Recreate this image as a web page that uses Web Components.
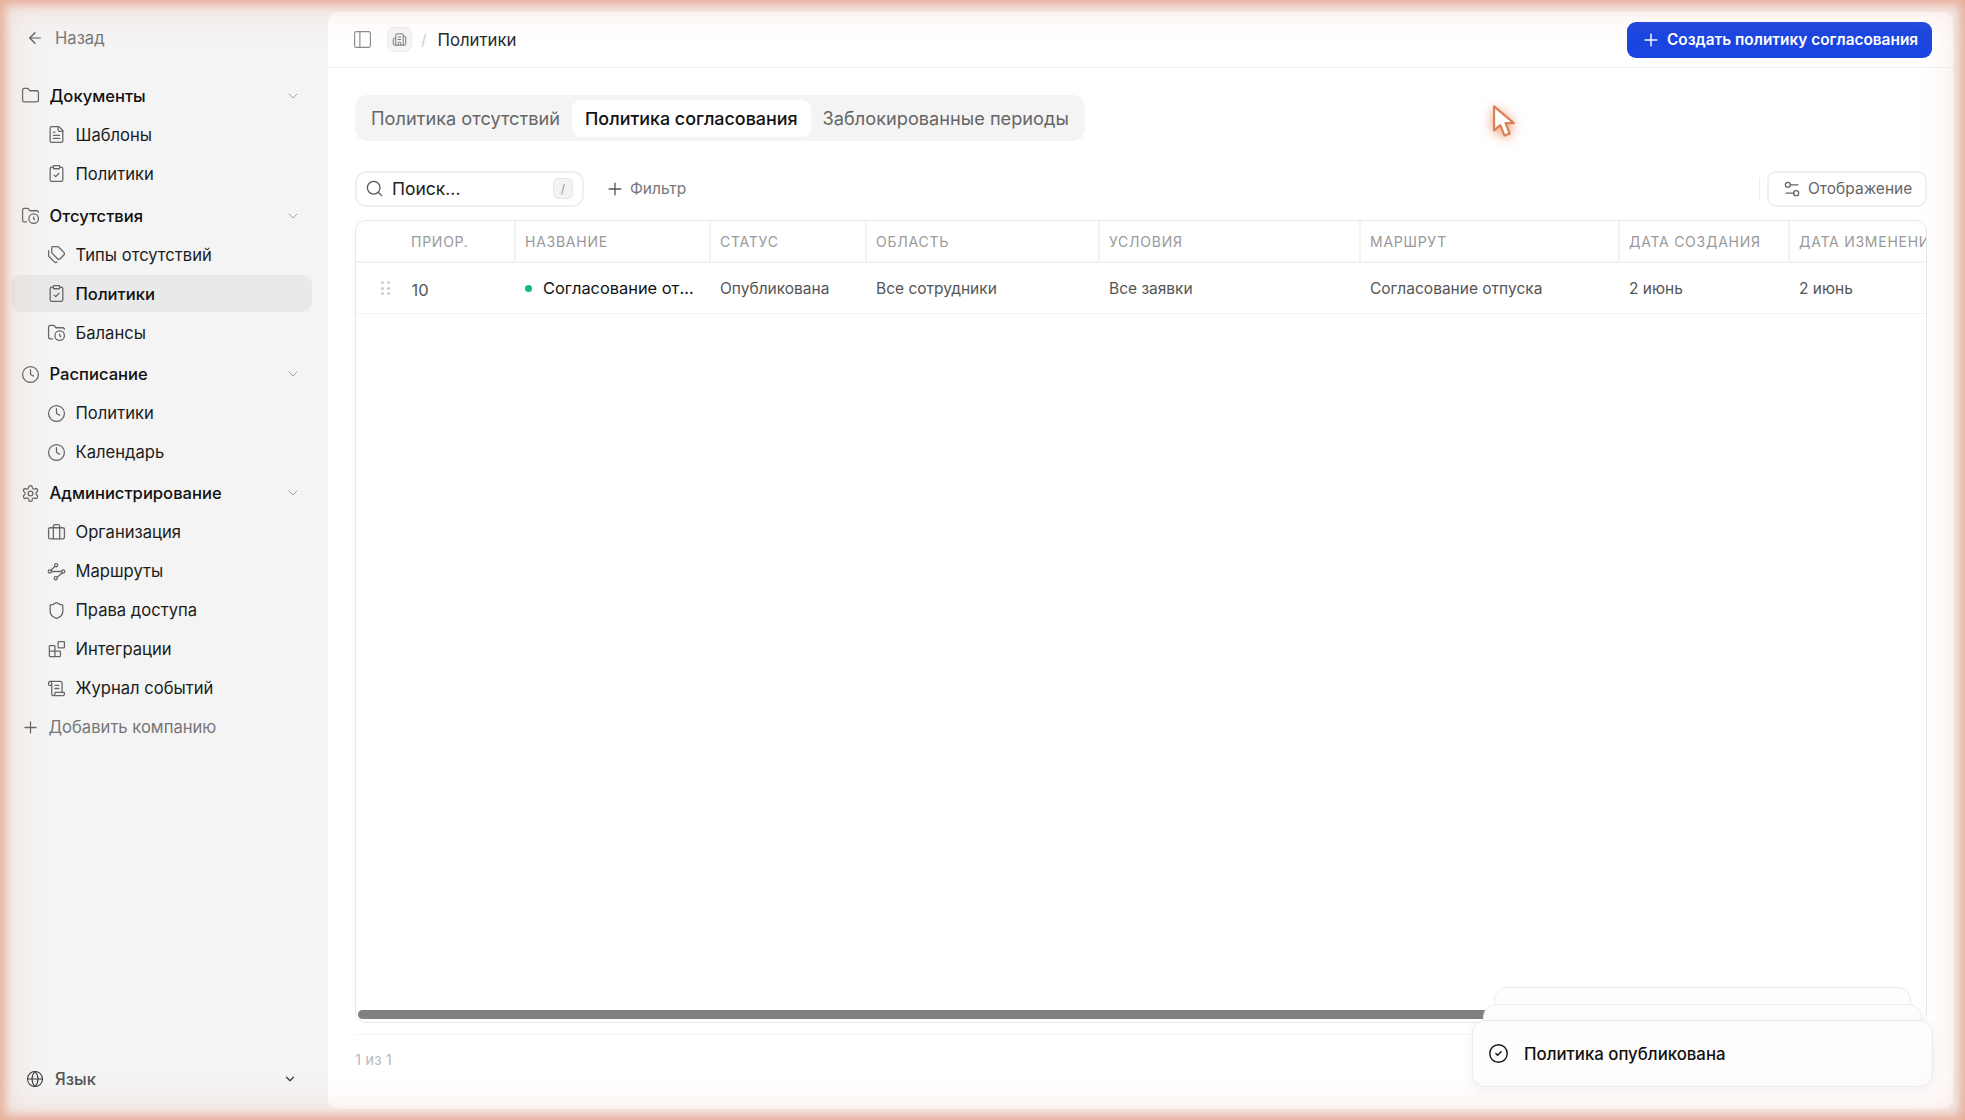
<!doctype html>
<html lang="ru">
<head>
<meta charset="utf-8">
<title>Политики</title>
<style>
  html, body { margin: 0; height: 100%; }
  body { background: #f4f4f4; font-family: Inter, "Noto Sans", sans-serif; color: #1c1c1c; overflow: hidden; }
</style>
</head>
<body>
<app-shell>
  <side-nav slot="nav"></side-nav>
  <top-bar slot="main"></top-bar>
  <policy-page slot="main"></policy-page>
</app-shell>

<script>
/*
 * Absence policies screen, page components
 */

const ICONS = {
  back: '<path d="M19 12H5"/><path d="m12 19-7-7 7-7"/>',
  plus: '<path d="M5 12h14"/><path d="M12 5v14"/>',
  chevron: '<path d="m6 9 6 6 6-6"/>',
  folder: '<path d="M20 20a2 2 0 0 0 2-2V8a2 2 0 0 0-2-2h-7.9a2 2 0 0 1-1.69-.9L9.6 3.9A2 2 0 0 0 7.93 3H4a2 2 0 0 0-2 2v13a2 2 0 0 0 2 2Z"/>',
  file: '<path d="M15 2H6a2 2 0 0 0-2 2v16a2 2 0 0 0 2 2h12a2 2 0 0 0 2-2V7Z"/><path d="M14 2v4a2 2 0 0 0 2 2h4"/><path d="M16 13H8"/><path d="M16 17H8"/><path d="M10 9H8"/>',
  clipboard: '<rect x="8" y="2" width="8" height="4" rx="1"/><path d="M16 4h2a2 2 0 0 1 2 2v14a2 2 0 0 1-2 2H6a2 2 0 0 1-2-2V6a2 2 0 0 1 2-2h2"/><path d="m9 14 2 2 4-4"/>',
  folderclock: '<circle cx="16" cy="16" r="6"/><path d="M7 20H4a2 2 0 0 1-2-2V5a2 2 0 0 1 2-2h3.9a2 2 0 0 1 1.69.9l.81 1.2a2 2 0 0 0 1.67.9H20a2 2 0 0 1 2 2"/><path d="M16 14v2l1 1"/>',
  tags: '<path d="M13.172 2a2 2 0 0 1 1.414.586l6.71 6.71a2.4 2.4 0 0 1 0 3.408l-4.592 4.592a2.4 2.4 0 0 1-3.408 0l-6.71-6.71A2 2 0 0 1 6 9.172V3a1 1 0 0 1 1-1z"/><path d="M2 7v6.172a2 2 0 0 0 .586 1.414l6.71 6.71a2.4 2.4 0 0 0 3.191.193"/>',
  clock: '<circle cx="12" cy="12" r="10"/><path d="M12 6v6l4 2"/>',
  settings: '<path d="M12.22 2h-.44a2 2 0 0 0-2 2v.18a2 2 0 0 1-1 1.73l-.43.25a2 2 0 0 1-2 0l-.15-.08a2 2 0 0 0-2.73.73l-.22.38a2 2 0 0 0 .73 2.73l.15.1a2 2 0 0 1 1 1.72v.51a2 2 0 0 1-1 1.74l-.15.09a2 2 0 0 0-.73 2.73l.22.38a2 2 0 0 0 2.73.73l.15-.08a2 2 0 0 1 2 0l.43.25a2 2 0 0 1 1 1.73V20a2 2 0 0 0 2 2h.44a2 2 0 0 0 2-2v-.18a2 2 0 0 1 1-1.73l.43-.25a2 2 0 0 1 2 0l.15.08a2 2 0 0 0 2.73-.73l.22-.39a2 2 0 0 0-.73-2.73l-.15-.08a2 2 0 0 1-1-1.74v-.5a2 2 0 0 1 1-1.74l.15-.09a2 2 0 0 0 .73-2.73l-.22-.38a2 2 0 0 0-2.73-.73l-.15.08a2 2 0 0 1-2 0l-.43-.25a2 2 0 0 1-1-1.73V4a2 2 0 0 0-2-2z"/><circle cx="12" cy="12" r="3"/>',
  briefcase: '<path d="M16 20V4a2 2 0 0 0-2-2h-4a2 2 0 0 0-2 2v16"/><rect x="2" y="6" width="20" height="14" rx="2"/>',
  route: '<circle cx="11.5" cy="4" r="2"/><circle cx="3.5" cy="12" r="2"/><circle cx="20.5" cy="12" r="2"/><circle cx="11" cy="20.5" r="2"/><path d="M5.5 12h13"/><path d="M10 5.5 5 10.5"/><path d="m19.2 13.8-6.4 5.4"/>',
  shield: '<path d="M20 13c0 5-3.5 7.5-7.66 8.95a1 1 0 0 1-.67-.01C7.5 20.5 4 18 4 13V6a1 1 0 0 1 1-1c2 0 4.5-1.2 6.24-2.72a1.17 1.17 0 0 1 1.52 0C14.51 3.81 17 5 19 5a1 1 0 0 1 1 1z"/>',
  blocks: '<rect x="14" y="2" width="8" height="8" rx="1"/><path d="M10 21V8a1 1 0 0 0-1-1H4a1 1 0 0 0-1 1v12a1 1 0 0 0 1 1h12a1 1 0 0 0 1-1v-5a1 1 0 0 0-1-1H3"/>',
  scroll: '<path d="M15 12h-5"/><path d="M15 8h-5"/><path d="M19 17V5a2 2 0 0 0-2-2H4"/><path d="M8 21h12a2 2 0 0 0 2-2v-1a1 1 0 0 0-1-1H11a1 1 0 0 0-1 1v1a2 2 0 1 1-4 0V5a2 2 0 1 0-4 0v2a1 1 0 0 0 1 1h3"/>',
  globe: '<circle cx="12" cy="12" r="10"/><path d="M12 2a14.5 14.5 0 0 0 0 20 14.5 14.5 0 0 0 0-20"/><path d="M2 12h20"/>',
  panel: '<rect x="3" y="3" width="18" height="18" rx="2"/><path d="M9 3v18"/>',
  building: '<path d="M10 12h4"/><path d="M10 8h4"/><path d="M14 21v-3a2 2 0 0 0-4 0v3"/><path d="M6 10H4a2 2 0 0 0-2 2v7a2 2 0 0 0 2 2h16a2 2 0 0 0 2-2V9a2 2 0 0 0-2-2h-2"/><path d="M6 21V5a2 2 0 0 1 2-2h8a2 2 0 0 1 2 2v16"/>',
  search: '<path d="m21 21-4.34-4.34"/><circle cx="11" cy="11" r="8"/>',
  sliders: '<path d="M14 17H5"/><path d="M19 7h-9"/><circle cx="17" cy="17" r="3"/><circle cx="7" cy="7" r="3"/>',
  check: '<circle cx="12" cy="12" r="10"/><path d="m9 12 2 2 4-4"/>'
};

class PageElement extends HTMLElement {
  connectedCallback() {
    if (this.shadowRoot) return;
    this.attachShadow({ mode: "open" });
    let t = document.createElement("template");
    t.innerHTML = this.template;
    this.shadowRoot.appendChild(t.content.cloneNode(true));
  }
}

class UiIcon extends PageElement {
  get template() {
    let size = this.getAttribute("size") || 19;
    let stroke = this.getAttribute("stroke") || 1.6;
    return `
    <style>
      :host { display: inline-flex; flex: none; width: ${size}px; height: ${size}px; }
      svg { width: 100%; height: 100%; fill: none; stroke: currentColor; stroke-width: ${stroke}; stroke-linecap: round; stroke-linejoin: round; }
    </style>
    <svg viewBox="0 0 24 24">${ICONS[this.getAttribute("name")]}</svg>
    `;
  }
}
customElements.define("ui-icon", UiIcon);

class AppShell extends PageElement {
  get template() {
    return `
    <style>
      :host { display: flex; position: relative; height: 100vh; box-sizing: border-box; }
      .nav { flex: 0 0 328px; }
      .main {
        flex: 1; min-width: 0; display: flex; flex-direction: column;
        margin: 12px 12px 11px 0; background: #fff; border-radius: 10px;
        position: relative;
      }
      .glow {
        position: absolute; inset: 0; pointer-events: none; z-index: 20;
        box-shadow: inset 0 0 10px 5px rgba(226, 150, 125, .66), inset 0 0 32px 10px rgba(240, 175, 155, .3);
      }
    </style>
    <div class="nav"><slot name="nav"></slot></div>
    <div class="main"><slot name="main"></slot></div>
    <div class="glow"></div>
    `;
  }
}
customElements.define("app-shell", AppShell);

class NavRow extends PageElement {
  get template() {
    let icon = this.getAttribute("icon");
    return `
    <style>
      :host { display: block; height: 39px; padding: 1px 0; box-sizing: border-box; font-size: 16.6px; }
      .row { display: flex; align-items: center; height: 37px; border-radius: 10px; gap: 10px; padding-left: 10px; }
      :host([kind="head"]) .row { font-weight: 500; color: #111; }
      :host([kind="sub"]) .row { padding-left: 36px; color: #1c1c1c; }
      :host([kind="muted"]) .row { color: #777; }
      :host([active]) .row { background: #e9e9e9; font-weight: 500; color: #111; }
      ui-icon { color: #666; }
      .label { white-space: nowrap; margin-left: -.5px; }
      :host([kind="muted"]) .label { margin-left: -1.5px; }
      .more { margin-left: auto; margin-right: 11px; color: #999; }
    </style>
    <div class="row">
      <ui-icon name="${icon}"></ui-icon>
      <span class="label"><slot></slot></span>
      ${this.getAttribute("kind") === "head" ? '<ui-icon class="more" name="chevron" size="16" stroke="1.4"></ui-icon>' : ""}
    </div>
    `;
  }
}
customElements.define("nav-row", NavRow);

class SideNav extends PageElement {
  get template() {
    return `
    <style>
      :host { display: flex; flex-direction: column; height: 100vh; box-sizing: border-box; padding: 0 16px 0 11px; }
      .back { display: flex; align-items: center; gap: 11px; height: 76px; padding: 0 0 0 15px; box-sizing: border-box; color: #777; font-size: 16.6px; }
      .back ui-icon { color: #555; }
      .group { margin-bottom: 2.4px; }
      .back + .group { margin-bottom: 3.2px; }
      .lang { margin-top: auto; display: flex; align-items: center; gap: 11px; height: 41px; margin-bottom: 21px; padding: 0 15px; color: #555; font-size: 16.6px; font-weight: 500; }
      .lang .more { margin-left: auto; margin-right: 0; color: #333; }
      .lang ui-icon { color: #333; }
    </style>
    <div class="back"><ui-icon name="back" size="18"></ui-icon>Назад</div>
    <div class="group">
      <nav-row kind="head" icon="folder">Документы</nav-row>
      <nav-row kind="sub" icon="file">Шаблоны</nav-row>
      <nav-row kind="sub" icon="clipboard">Политики</nav-row>
    </div>
    <div class="group">
      <nav-row kind="head" icon="folderclock">Отсутствия</nav-row>
      <nav-row kind="sub" icon="tags">Типы отсутствий</nav-row>
      <nav-row kind="sub" icon="clipboard" active>Политики</nav-row>
      <nav-row kind="sub" icon="folderclock">Балансы</nav-row>
    </div>
    <div class="group">
      <nav-row kind="head" icon="clock">Расписание</nav-row>
      <nav-row kind="sub" icon="clock">Политики</nav-row>
      <nav-row kind="sub" icon="clock">Календарь</nav-row>
    </div>
    <div class="group">
      <nav-row kind="head" icon="settings">Администрирование</nav-row>
      <nav-row kind="sub" icon="briefcase">Организация</nav-row>
      <nav-row kind="sub" icon="route">Маршруты</nav-row>
      <nav-row kind="sub" icon="shield">Права доступа</nav-row>
      <nav-row kind="sub" icon="blocks">Интеграции</nav-row>
      <nav-row kind="sub" icon="scroll">Журнал событий</nav-row>
      <nav-row kind="muted" icon="plus">Добавить компанию</nav-row>
    </div>
    <div class="lang">
      <ui-icon name="globe" size="18" stroke="1.4"></ui-icon>Язык
      <ui-icon class="more" name="chevron" size="14" stroke="2"></ui-icon>
    </div>
    `;
  }
}
customElements.define("side-nav", SideNav);

class TopBar extends PageElement {
  get template() {
    return `
    <style>
      :host { display: flex; align-items: center; flex: none; height: 56px; box-sizing: border-box; padding: 0 21px 0 24px; border-bottom: 1.5px solid #f4f4f4; }
      .panel { color: #888; margin-right: 14px; }
      .org { display: flex; align-items: center; justify-content: center; width: 25px; height: 25px; box-sizing: border-box; background: #f5f5f5; border: 1px solid #ebebeb; border-radius: 7px; color: #777; }
      .sep { margin: 0 11px 0 9px; color: #ccc; font-size: 15px; }
      .crumb { font-size: 16.8px; color: #2a2a2a; }
      .create {
        margin-left: auto; display: flex; align-items: center; gap: 6px; height: 36px; width: 305px; box-sizing: border-box;
        padding: 0 13px 0 14px; background: #1a45e0; color: #fff; border-radius: 9px;
        font-size: 15.4px; font-weight: 600; white-space: nowrap;
      }
    </style>
    <ui-icon class="panel" name="panel" size="21" stroke="1.3"></ui-icon>
    <span class="org"><ui-icon name="building" size="15"></ui-icon></span>
    <span class="sep">/</span>
    <span class="crumb">Политики</span>
    <div class="create"><ui-icon name="plus" size="20" stroke="1.7"></ui-icon>Создать политику согласования</div>
    `;
  }
}
customElements.define("top-bar", TopBar);

class TabBar extends PageElement {
  get template() {
    return `
    <style>
      :host { display: inline-flex; align-self: flex-start; align-items: center; height: 46px; box-sizing: border-box; padding: 0 16px; background: #f4f4f4; border-radius: 12px; font-size: 18.2px; color: #666; white-space: nowrap; }
      .tab { display: block; }
      .on { display: flex; align-items: center; height: 37px; margin: 0 12px; padding: 0 13px; background: #fff; border-radius: 9px; color: #111; font-weight: 500; font-size: 17.9px; }
    </style>
    <span class="tab">Политика отсутствий</span>
    <span class="on">Политика согласования</span>
    <span class="tab">Заблокированные периоды</span>
    `;
  }
}
customElements.define("tab-bar", TabBar);

class TableTools extends PageElement {
  get template() {
    return `
    <style>
      :host { display: flex; align-items: center; height: 35px; flex: none; }
      .search { display: flex; align-items: center; width: 229px; height: 36px; box-sizing: border-box; padding: 0 9px 0 8px; gap: 8px; border: 2px solid #f0f0f0; border-radius: 11px; font-size: 17.5px; color: #1c1c1c; }
      .search ui-icon { color: #555; }
      kbd { margin-left: auto; display: flex; align-items: center; justify-content: center; width: 20px; height: 21px; background: #f3f3f3; border: 1px solid #e6e6e6; border-radius: 5px; font: 12px Inter, sans-serif; color: #999; box-sizing: border-box; }
      .filter { display: flex; align-items: center; gap: 5px; margin-left: 21px; font-size: 15.5px; color: #777; }
      .filter ui-icon { color: #555; }
      .sep { margin-left: auto; width: 1px; height: 22px; background: #eee; margin-right: 7px; }
      .view { display: flex; align-items: center; gap: 6px; height: 36px; width: 160px; box-sizing: border-box; padding-left: 13px; border: 2px solid #f0f0f0; border-radius: 9px; font-size: 15.5px; color: #666; }
    </style>
    <div class="search"><ui-icon name="search" size="19"></ui-icon>Поиск...<kbd>/</kbd></div>
    <div class="filter"><ui-icon name="plus" size="20"></ui-icon>Фильтр</div>
    <span class="sep"></span>
    <div class="view"><ui-icon name="sliders" size="20"></ui-icon>Отображение</div>
    `;
  }
}
customElements.define("table-tools", TableTools);

class PolicyTable extends PageElement {
  get template() {
    let columns = ["Приор.", "Название", "Статус", "Область", "Условия", "Маршрут", "Дата создания", "Дата изменения"];
    let head = columns.map((c, i) => `<div class="th ${i === 0 ? "first" : ""}">${c}</div>`).join("");
    return `
    <style>
      :host { display: flex; flex-direction: column; flex: 1; min-height: 0; margin-top: 14px; border: 1.5px solid #e8e8e8; border-radius: 11px; overflow: hidden; }
      .grid { display: grid; grid-template-columns: 158px 195px 156px 233px 261px 259px 170px 172px; }
      .th { display: flex; align-items: center; height: 40px; padding-left: 9px; font-size: 14px; letter-spacing: .75px; text-transform: uppercase; color: #999; border-left: 2px solid #f3f3f3; box-sizing: border-box; white-space: nowrap; overflow: hidden; margin: 0; }
      .th.first { border-left: 0; padding-left: 55px; }
      .head { border-bottom: 2px solid #f2f2f2; }
      .row { border-bottom: 1.5px solid #f3f3f3; }
      .td { display: flex; align-items: center; height: 50px; padding: 0 9px; font-size: 15.5px; color: #555; white-space: nowrap; overflow: hidden; box-sizing: border-box; border-left: 2px solid transparent; }
      .td.first { padding-left: 25px; border-left: 0; color: #555; font-size: 16.5px; }
      .grip { display: grid; grid-template-columns: 3px 3px; gap: 2.5px; margin-right: 22px; }
      .grip i { display: block; width: 3px; height: 3px; border-radius: 50%; background: #ccc; }
      .num { padding-top: 4px; }
      .name { color: #111; font-size: 16.4px; gap: 11px; }
      .dot { flex: none; width: 7px; height: 7px; border-radius: 50%; background: #10b981; }
      .ellipsis { overflow: hidden; text-overflow: ellipsis; }
      .space { flex: 1; }
      .bar { flex: none; height: 9px; margin: 0 120px 3px 2px; background: #808080; border-radius: 5px; }
    </style>
    <div class="grid head">${head}</div>
    <div class="grid row">
      <div class="td first"><span class="grip"><i></i><i></i><i></i><i></i><i></i><i></i></span><span class="num">10</span></div>
      <div class="td name"><span class="dot"></span><span class="ellipsis">Согласование отпуска</span></div>
      <div class="td">Опубликована</div>
      <div class="td">Все сотрудники</div>
      <div class="td">Все заявки</div>
      <div class="td">Согласование отпуска</div>
      <div class="td">2 июнь</div>
      <div class="td">2 июнь</div>
    </div>
    <div class="space"></div>
    <div class="bar"></div>
    `;
  }
}
customElements.define("policy-table", PolicyTable);

class PolicyPage extends PageElement {
  get template() {
    return `
    <style>
      :host { display: flex; flex-direction: column; flex: 1; min-height: 0; padding: 27px 26px 0 27px; }
      table-tools { margin-top: 30px; }
      .foot { flex: none; margin-top: 11px; height: 75px; box-sizing: border-box; border-top: 1.5px solid #f4f4f4; padding-top: 15px; font-size: 15px; color: #bbb; }
    </style>
    <tab-bar></tab-bar>
    <table-tools></table-tools>
    <policy-table></policy-table>
    <div class="foot">1 из 1</div>
    <toast-stack></toast-stack>
    <mouse-pointer></mouse-pointer>
    `;
  }
}
customElements.define("policy-page", PolicyPage);

class ToastStack extends PageElement {
  get template() {
    return `
    <style>
      :host { display: block; position: absolute; right: 20px; bottom: 22px; width: 461px; height: 100px; font-size: 16.8px; font-weight: 500; color: #111; }
      .card { position: absolute; box-sizing: border-box; background: #fefdfc; border: 1px solid #ececec; border-radius: 13px; }
      .c3 { left: 22px; right: 22px; top: 0; height: 50px; }
      .c2 { left: 11px; right: 11px; top: 17px; height: 50px; }
      .c1 { left: 0; right: 0; top: 33px; height: 67px; display: flex; align-items: center; gap: 15px; padding-left: 15px; box-shadow: 0 4px 14px rgba(0,0,0,.06); }
    </style>
    <div class="card c3"></div>
    <div class="card c2"></div>
    <div class="card c1"><ui-icon name="check" size="21" stroke="1.6"></ui-icon>Политика опубликована</div>
    `;
  }
}
customElements.define("toast-stack", ToastStack);

class MousePointer extends PageElement {
  get template() {
    return `
    <style>
      :host { display: block; position: absolute; left: 1164px; top: 92px; width: 25px; height: 34px; z-index: 10; }
      svg { width: 100%; height: 100%; overflow: visible; filter: drop-shadow(0 2px 6px rgba(235, 110, 60, .75)); }
    </style>
    <svg viewBox="0 0 24 32"><path d="M2 2v23l6-5 4 10 5-2-4-10h8z" fill="#fff" stroke="#d97f58" stroke-width="2" stroke-linejoin="round"/></svg>
    `;
  }
}
customElements.define("mouse-pointer", MousePointer);
</script>
</body>
</html>
